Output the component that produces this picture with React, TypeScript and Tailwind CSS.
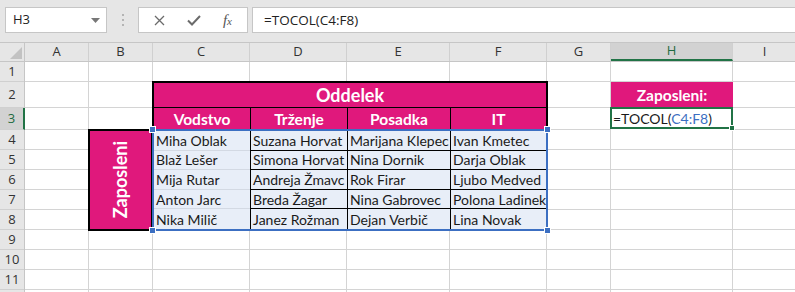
import clsx from 'clsx'

const people = [
  ['Miha Oblak', 'Suzana Horvat', 'Marijana Klepec', 'Ivan Kmetec'],
  ['Blaž Lešer', 'Simona Horvat', 'Nina Dornik', 'Darja Oblak'],
  ['Mija Rutar', 'Andreja Žmavc', 'Rok Firar', 'Ljubo Medved'],
  ['Anton Jarc', 'Breda Žagar', 'Nina Gabrovec', 'Polona Ladinek'],
  ['Nika Milič', 'Janez Rožman', 'Dejan Verbič', 'Lina Novak'],
]

const departments = ['Vodstvo', 'Trženje', 'Posadka', 'IT']

const columns = [
  { label: 'A', w: 'w-[64px]' },
  { label: 'B', w: 'w-[64px]' },
  { label: 'C', w: 'w-[97px]' },
  { label: 'D', w: 'w-[97px]' },
  { label: 'E', w: 'w-[103px]' },
  { label: 'F', w: 'w-[97px]' },
  { label: 'G', w: 'w-[64px]' },
  { label: 'H', w: 'w-[122px]', active: true },
  { label: 'I', w: 'w-[64px]' },
]

const rows = [
  { n: '1', h: 'h-[20px]' },
  { n: '2', h: 'h-[26px]' },
  { n: '3', h: 'h-[22px]', active: true },
  { n: '4', h: 'h-[20px]' },
  { n: '5', h: 'h-[20px]' },
  { n: '6', h: 'h-[20px]' },
  { n: '7', h: 'h-[20px]' },
  { n: '8', h: 'h-[20px]' },
  { n: '9', h: 'h-[20px]' },
  { n: '10', h: 'h-[20px]' },
  { n: '11', h: 'h-[20px]' },
  { n: '', h: 'h-[20px]' },
]

function FormulaBar() {
  return (
    <div className="h-[42px] bg-[#e6e6e6] flex items-start pt-[7px] pl-[5px] font-['Open_Sans',sans-serif]">
      {/* Name box */}
      <div className="w-[102px] h-[26px] bg-white border border-[#c6c6c6] flex items-center justify-between pl-[7px] pr-[6px]">
        <span className="text-[13px] text-[#222]">H3</span>
        <svg width="9" height="5" viewBox="0 0 9 5">
          <path d="M0 0h9L4.5 5z" fill="#777" />
        </svg>
      </div>

      {/* Drag dots */}
      <div className="w-[31px] h-[26px] flex flex-col items-center justify-center gap-[3px]">
        <span className="w-[2px] h-[2px] bg-[#b4b4b4]" />
        <span className="w-[2px] h-[2px] bg-[#b4b4b4]" />
        <span className="w-[2px] h-[2px] bg-[#b4b4b4]" />
      </div>

      {/* Cancel / enter / function */}
      <div className="w-[110px] h-[26px] bg-white border border-[#c6c6c6] flex items-center justify-around px-[4px]">
        <svg width="11" height="11" viewBox="0 0 11 11">
          <path d="M1 1l9 9M10 1l-9 9" stroke="#6b6b6b" strokeWidth="1.3" />
        </svg>
        <svg width="14" height="11" viewBox="0 0 14 11">
          <path d="M1 5.5l4 4L13 1" stroke="#6b6b6b" strokeWidth="2" fill="none" />
        </svg>
        <span className="italic text-[15px] text-[#555] font-['Liberation_Serif',serif] leading-none">
          f<span className="text-[11px]">x</span>
        </span>
      </div>

      {/* Formula input */}
      <div className="ml-[4px] flex-1 h-[26px] bg-white border border-[#c6c6c6] border-r-0 flex items-center pl-[11px]">
        <span className="text-[13.5px] text-[#222]">=TOCOL(C4:F8)</span>
      </div>
    </div>
  )
}

function ColumnHeaders() {
  return (
    <div className="h-[20px] flex bg-[#e6e6e6] border-t border-b border-[#c6c6c6] font-['Open_Sans',sans-serif] text-[13px]">
      <div className="w-[25px] shrink-0 border-r border-[#c6c6c6] flex items-end justify-end p-[2px]">
        <svg width="12" height="12" viewBox="0 0 12 12">
          <path d="M12 0v12H0z" fill="#c2c2c2" />
        </svg>
      </div>
      {columns.map((c) => (
        <div
          key={c.label}
          className={clsx(
            c.w,
            'shrink-0 flex items-center justify-center border-r border-[#d0d0d0]',
            c.active ? 'bg-[#d2d2d2] border-b-2 border-b-[#217346] text-[#1e6b41]' : 'text-[#333]'
          )}
        >
          {c.label}
        </div>
      ))}
    </div>
  )
}

function RowHeaders() {
  return (
    <div className="w-[25px] shrink-0 bg-[#e6e6e6] border-r border-[#c6c6c6] font-['Open_Sans',sans-serif] text-[13px]">
      {rows.map((r, i) => (
        <div
          key={i}
          className={clsx(
            r.h,
            'flex items-center justify-center border-b border-[#d0d0d0]',
            r.active ? 'bg-[#d2d2d2] border-r-2 border-r-[#217346] text-[#1e6b41] -mr-px' : 'text-[#333]'
          )}
        >
          {r.n}
        </div>
      ))}
    </div>
  )
}

function Handle({ className }: { className: string }) {
  return <span className={clsx('absolute w-[7px] h-[7px] bg-[#3c6fc2] border border-white', className)} />
}

function Cells() {
  return (
    <div className="grid grid-cols-[64px_64px_97px_97px_103px_97px_64px_122px_64px] grid-rows-[20px_26px_22px_20px_20px_20px_20px_20px_20px_20px_20px_20px] font-['Lato',sans-serif]">
      {Array.from({ length: 73 }).map((_, i) => (
        <div key={i} className="border-r border-b border-[#d4d4d4]" />
      ))}

      {/* Oddelek heading C2:F3 */}
      <div className="col-start-3 col-span-4 row-start-2 row-span-2 -m-px border-2 border-black bg-[#e0187c] text-white font-bold flex flex-col">
        <div className="h-[24px] flex items-center justify-center text-[18px]">Oddelek</div>
        <div className="flex-1 grid grid-cols-[96px_97px_103px_1fr] border-t border-black text-[15.5px]">
          {departments.map((d, i) => (
            <div key={d} className={clsx('flex items-center justify-center', i > 0 && 'border-l border-black')}>
              {d}
            </div>
          ))}
        </div>
      </div>

      {/* Zaposleni side label B4:B8 */}
      <div className="col-start-2 row-start-4 row-span-5 -ml-px -my-px border-2 border-black bg-[#e0187c] flex items-center justify-center">
        <span className="[writing-mode:vertical-rl] rotate-180 text-white font-bold text-[18px]">Zaposleni</span>
      </div>

      {/* Data C4:F8 */}
      <div className="relative col-start-3 col-span-4 row-start-4 row-span-5 -m-px border-2 border-[#3c6fc2] grid grid-cols-[96px_97px_103px_1fr] grid-rows-5 bg-[#e8eef8] text-[14px] text-[#1a1a1a]">
        {people.map((row, r) =>
          row.map((name, c) => (
            <div
              key={name + c}
              className={clsx(
                'flex items-center pl-[2px] whitespace-nowrap',
                c > 0 && 'border-l border-black',
                r < 4 && 'border-b border-[#d3d9e3]'
              )}
            >
              {name}
            </div>
          ))
        )}
        <Handle className="-left-[5px] -top-[5px]" />
        <Handle className="-right-[5px] -top-[5px]" />
        <Handle className="-left-[5px] -bottom-[5px]" />
        <Handle className="-right-[5px] -bottom-[5px]" />
      </div>

      {/* H2 */}
      <div className="col-start-8 row-start-2 bg-[#e0187c] text-white font-bold text-[15.5px] flex items-center justify-center pt-[2px]">
        Zaposleni:
      </div>

      {/* H3 active cell */}
      <div className="relative col-start-8 row-start-3 -ml-px -mt-px mb-px border-2 border-[#217346] bg-white flex items-center pl-[1px] text-[14px] text-[#1a1a1a]">
        <span>
          =TOCOL(<span className="text-[#3c6fc2]">C4:F8</span>)
        </span>
        <span className="absolute -right-[4px] -bottom-[4px] w-[6px] h-[6px] bg-[#217346] border border-white" />
      </div>
    </div>
  )
}

export default function App() {
  return (
    <div className="w-[795px] h-[292px] overflow-hidden bg-white">
      <FormulaBar />
      <ColumnHeaders />
      <div className="flex">
        <RowHeaders />
        <Cells />
      </div>
    </div>
  )
}
